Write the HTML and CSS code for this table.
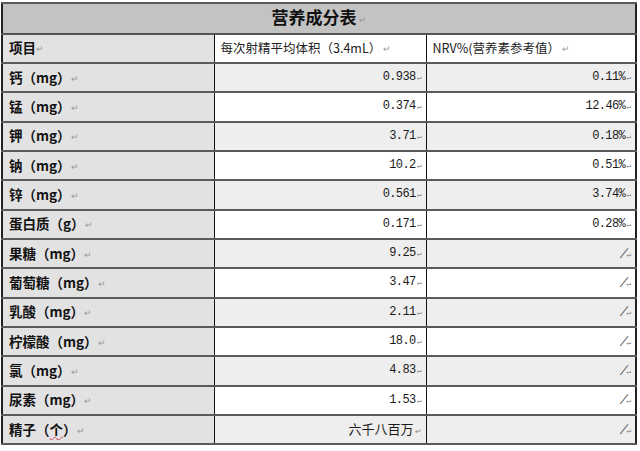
FILE: index.html
```html
<!DOCTYPE html>
<html lang="zh">
<head>
<meta charset="utf-8">
<link rel="stylesheet" href="styles.css">
</head>
<body>
<table class="nt">
  <colgroup><col class="c1"><col class="c2"><col class="c3"></colgroup>
  <tr class="title"><td colspan="3">营养成分表<span class="pm">↵</span></td></tr>
  <tr class="hd"><td class="k">项目<span class="pm">↵</span></td><td class="h">每次射精平均体积（3.4mL）<span class="pm">↵</span></td><td class="h">NRV%(营养素参考值）<span class="pm">↵</span></td></tr>
  <tr class="g"><td class="k">钙（mg）<span class="pm">↵</span></td><td class="n">0.938<span class="cm">↵</span></td><td class="n">0.11%<span class="cm">↵</span></td></tr>
  <tr><td class="k">锰（mg）<span class="pm">↵</span></td><td class="n">0.374<span class="cm">↵</span></td><td class="n">12.46%<span class="cm">↵</span></td></tr>
  <tr class="g"><td class="k">钾（mg）<span class="pm">↵</span></td><td class="n">3.71<span class="cm">↵</span></td><td class="n">0.18%<span class="cm">↵</span></td></tr>
  <tr><td class="k">钠（mg）<span class="pm">↵</span></td><td class="n">10.2<span class="cm">↵</span></td><td class="n">0.51%<span class="cm">↵</span></td></tr>
  <tr class="g"><td class="k">锌（mg）<span class="pm">↵</span></td><td class="n">0.561<span class="cm">↵</span></td><td class="n">3.74%<span class="cm">↵</span></td></tr>
  <tr><td class="k">蛋白质（g）<span class="pm">↵</span></td><td class="n">0.171<span class="cm">↵</span></td><td class="n">0.28%<span class="cm">↵</span></td></tr>
  <tr class="g"><td class="k">果糖（mg）<span class="pm">↵</span></td><td class="n">9.25<span class="cm">↵</span></td><td class="n"><span class="sl">/</span><span class="cm">↵</span></td></tr>
  <tr><td class="k">葡萄糖（mg）<span class="pm">↵</span></td><td class="n">3.47<span class="cm">↵</span></td><td class="n"><span class="sl">/</span><span class="cm">↵</span></td></tr>
  <tr class="g"><td class="k">乳酸（mg）<span class="pm">↵</span></td><td class="n">2.11<span class="cm">↵</span></td><td class="n"><span class="sl">/</span><span class="cm">↵</span></td></tr>
  <tr><td class="k">柠檬酸（mg）<span class="pm">↵</span></td><td class="n">18.0<span class="cm">↵</span></td><td class="n"><span class="sl">/</span><span class="cm">↵</span></td></tr>
  <tr class="g"><td class="k">氯（mg）<span class="pm">↵</span></td><td class="n">4.83<span class="cm">↵</span></td><td class="n"><span class="sl">/</span><span class="cm">↵</span></td></tr>
  <tr><td class="k">尿素（mg）<span class="pm">↵</span></td><td class="n">1.53<span class="cm">↵</span></td><td class="n"><span class="sl">/</span><span class="cm">↵</span></td></tr>
  <tr class="g"><td class="k">精子（<span class="sp">个</span>）<span class="pm">↵</span></td><td class="n cn">六千八百万<span class="cm">↵</span></td><td class="n"><span class="sl">/</span><span class="cm">↵</span></td></tr>
</table>
</body>
</html>
```
FILE: styles.css
```css
html, body {
  margin: 0;
  padding: 0;
  background: #ffffff;
}
body {
  padding: 2px 0 0 1px;
  font-family: "Noto Sans CJK SC", sans-serif;
  color: #1a1a1a;
}
.nt {
  border-collapse: collapse;
  table-layout: fixed;
  width: 634px;
  border: 2px solid #222;
}
.c1 { width: 212px; }
.c2 { width: 212px; }
.c3 { width: 210px; }
.nt td {
  border-left: 1px solid #111;
  border-right: 1px solid #111;
  border-top: 2px solid #5a5a5a;
  border-bottom: 2px solid #5a5a5a;
  height: 27.35px;
  padding: 0 6px;
  font-size: 13px;
  line-height: 16px;
  white-space: nowrap;
  overflow: hidden;
  background: #ffffff;
}
.nt .g td { background: #eeeeee; }
.nt td.k {
  background: #e2e2e2;
  font-weight: bold;
  font-size: 13.5px;
  color: #111;
}
.nt .title td {
  background: #c3c3c3;
  text-align: center;
  font-size: 17px;
  font-weight: bold;
  height: 28.5px;
  color: #111;
  border-bottom: 2px solid #555;
}
.nt td.h {
  font-size: 12.5px;
  color: #222;
}
.nt td.n {
  text-align: right;
  padding-right: 4px;
  font-family: "Liberation Mono", "Noto Sans CJK SC", monospace;
  font-size: 12px;
  letter-spacing: -0.6px;
}
.nt td.cn {
  font-family: "Noto Sans CJK SC", sans-serif;
  font-size: 13px;
  letter-spacing: 0;
}
.pm {
  font-size: 9px;
  color: #9a9a9a;
  font-weight: normal;
  margin-left: 2px;
  vertical-align: 1px;
}
.k .pm {
  margin-left: 0;
}
.cm {
  font-size: 8px;
  color: #8a8a8a;
  letter-spacing: 0;
  margin-left: 1px;
}
.sl {
  font-family: "DejaVu Sans", sans-serif;
  font-size: 12px;
  color: #444;
  display: inline-block;
  transform: skewX(-25deg);
}
.sp {
  text-decoration: underline wavy #d04060;
  text-decoration-thickness: 1px;
}
```
